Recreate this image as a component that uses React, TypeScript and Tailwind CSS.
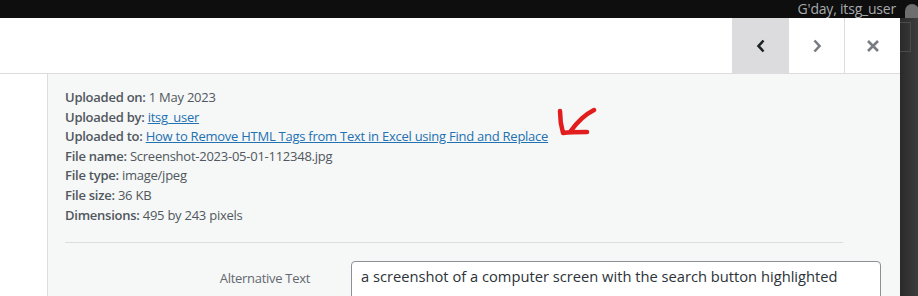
const font = { fontFamily: "'Open Sans', 'Noto Sans', sans-serif" };

const details = [
  { label: "Uploaded on:", value: "1 May 2023" },
  { label: "Uploaded by:", value: "itsg_user", link: true },
  {
    label: "Uploaded to:",
    value: "How to Remove HTML Tags from Text in Excel using Find and Replace",
    link: true,
  },
  { label: "File name:", value: "Screenshot-2023-05-01-112348.jpg" },
  { label: "File type:", value: "image/jpeg" },
  { label: "File size:", value: "36 KB" },
  { label: "Dimensions:", value: "495 by 243 pixels" },
];

export default function App() {
  return (
    <div
      className="w-[918px] h-[296px] overflow-hidden bg-[#333333] flex flex-col"
      style={font}
    >
      {/* admin bar */}
      <div className="h-[18px] bg-[#0e0e0e] flex items-center justify-end shrink-0 overflow-hidden">
        <span className="text-[14px] text-[#a7aaad] leading-none -mt-[1px] tracking-[-0.2px]">G'day, itsg_user</span>
        <div className="w-[14px] h-[15px] ml-[9px] mr-[-1px] mt-[4px] bg-[#6e6e6e] rounded-t-[7px]" />
      </div>

      <div className="flex flex-1 min-h-0">
        <div className="w-[900px] flex flex-col">
          {/* modal header */}
          <div className="h-[56px] bg-white border-b border-[#dcdcde] flex justify-end shrink-0">
            <button className="w-[56px] h-full bg-[#dcdcde] border-l border-[#dcdcde] flex items-center justify-center">
              <svg width="14" height="16" viewBox="0 0 14 16">
                <path d="M9.5 2.5 L4.5 8 L9.5 13.5" fill="none" stroke="#1d2327" strokeWidth="2.6" />
              </svg>
            </button>
            <button className="w-[56px] h-full border-l border-[#dcdcde] flex items-center justify-center">
              <svg width="14" height="16" viewBox="0 0 14 16">
                <path d="M4.5 2.5 L9.5 8 L4.5 13.5" fill="none" stroke="#787c82" strokeWidth="2.6" />
              </svg>
            </button>
            <button className="w-[56px] h-full border-l border-[#dcdcde] flex items-center justify-center">
              <svg width="14" height="14" viewBox="0 0 14 14">
                <path d="M2 2 L12 12 M12 2 L2 12" fill="none" stroke="#787c82" strokeWidth="2.6" />
              </svg>
            </button>
          </div>

          {/* body */}
          <div className="flex flex-1 min-h-0 bg-white">
            <div className="w-[47px] shrink-0" />
            <div className="flex-1 bg-[#f6f7f7] border-l border-[#dcdcde] pl-[17px] pt-[14px] relative">
              <div className="text-[13px] leading-[19.6px] text-[#50575e] tracking-[-0.25px]">
                {details.map((d) => (
                  <div key={d.label} className="whitespace-nowrap">
                    <strong className="font-semibold">{d.label}</strong>{" "}
                    {d.link ? (
                      <a className="text-[#2271b1] underline">{d.value}</a>
                    ) : (
                      d.value
                    )}
                  </div>
                ))}
              </div>

              {/* hand-drawn arrow */}
              <svg
                className="absolute left-[509px] top-[33px]"
                width="44"
                height="34"
                viewBox="0 0 44 34"
              >
                <path
                  d="M37 3 C29 7 20 15 13 25 M3 4 C3 11 4 19 6 26 C13 25 22 25 30 25"
                  fill="none"
                  stroke="#e21d1d"
                  strokeWidth="4.5"
                  strokeLinecap="round"
                  strokeLinejoin="round"
                />
              </svg>

              <div className="w-[778px] h-px bg-[#dcdcde] mt-[17px]" />

              <div className="flex items-start mt-[18px]">
                <label className="w-[245px] text-right text-[13px] text-[#646970] pt-[8px] shrink-0 tracking-[-0.3px]">
                  Alternative Text
                </label>
                <div className="ml-[41px] w-[530px] h-[60px] bg-white border border-[#8c8f94] rounded-[4px] px-[9px] pt-[3px] text-[14.7px] text-[#2c3338] whitespace-nowrap">
                  a screenshot of a computer screen with the search button highlighted
                </div>
              </div>
            </div>
          </div>
        </div>
        <div className="flex-1 bg-gradient-to-r from-[#2a2a2a] to-[#3d3d3d] relative">
          <div className="absolute left-0 top-[4px] w-[11px] h-[30px] border border-[#4a4a4a] border-l-0" />
        </div>
      </div>
    </div>
  );
}
